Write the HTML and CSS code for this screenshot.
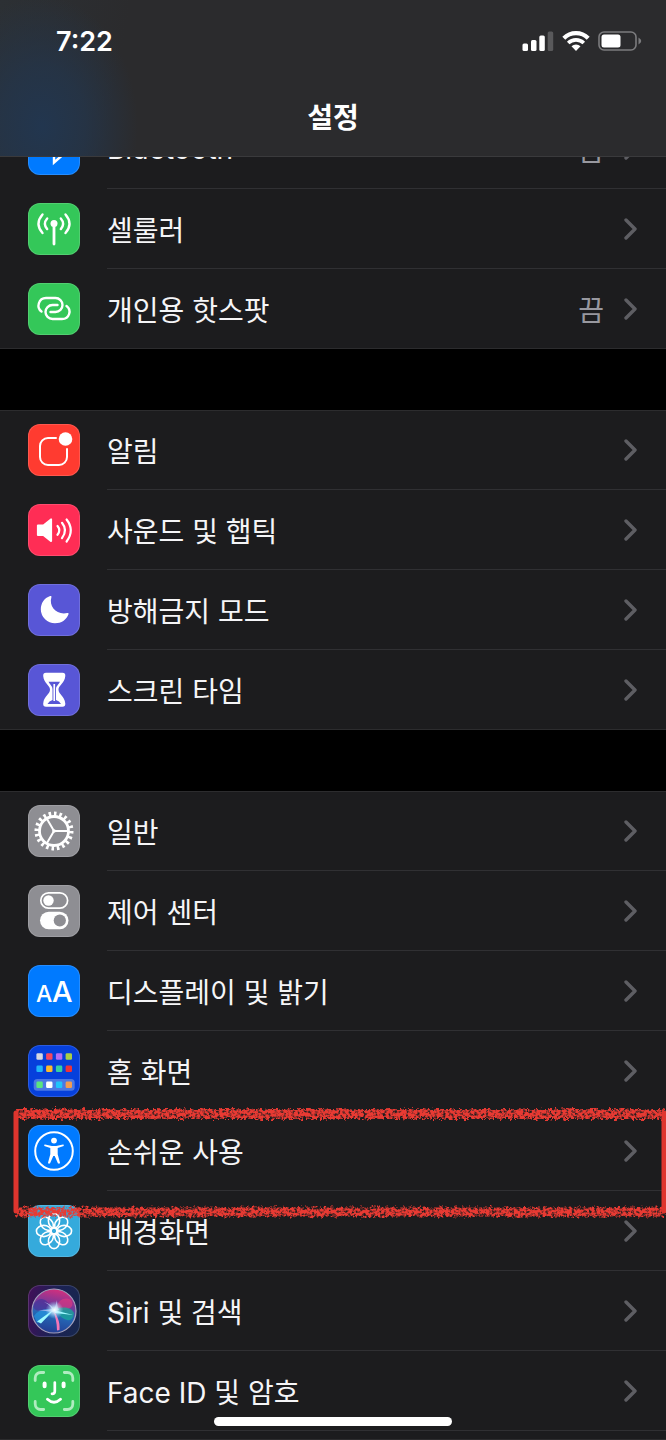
FILE: index.html
```html
<!DOCTYPE html>
<html lang="ko">

<head>
    <meta charset="UTF-8">
    <meta name="viewport" content="width=device-width, initial-scale=1.0">
    <title>설정</title>
    <link rel="stylesheet" href="styles.css">
</head>

<body>
    <svg class="defs" aria-hidden="true">
        <symbol id="chevron" viewBox="0 0 13 22">
            <path d="M2 2l9 9-9 9" fill="none" stroke="#5e5e63" stroke-width="3.400" stroke-linecap="round" stroke-linejoin="round" />
        </symbol>
    </svg>

    <header class="header">
        <div class="status-bar">
            <span class="time">7:22</span>
            <div class="status-icons">
                <svg width="32" height="20" viewBox="0 0 32 20" fill="#fff">
                    <rect x="0.5" y="12.5" width="5.5" height="7.5" rx="1.5" />
                    <rect x="9" y="9" width="5.5" height="11" rx="1.5" />
                    <rect x="17.300" y="4.5" width="5.5" height="15.5" rx="1.5" />
                    <rect x="25.700" y="0.5" width="5.5" height="19.5" rx="1.5" fill="#59595b" />
                </svg>
                <svg width="28" height="20" viewBox="0 0 28 20" fill="none" stroke="#fff">
                    <path d="M1.8 7.2a17.4 17.4 0 0 1 24.4 0" stroke-width="4.2" />
                    <path d="M6.2 12a11.2 11.2 0 0 1 15.6 0" stroke-width="3.6" />
                    <path d="M9.5 15.3a6.4 6.4 0 0 1 9 0L14 20z" fill="#fff" stroke="none" />
                </svg>
                <svg width="44" height="20" viewBox="0 0 44 20">
                    <rect x="1" y="1" width="37" height="18" rx="5" fill="none" stroke="#7c7c7e" stroke-width="1.6" />
                    <rect x="3.5" y="3.5" width="19" height="13" rx="2.5" fill="#fff" />
                    <path d="M40.5 6.5q5.500 3.500 0 7z" fill="#7c7c7e" />
                </svg>
            </div>
        </div>
        <h1 class="title">설정</h1>
    </header>

    <main class="settings">
        <nav class="group">
            <a class="row" href="#bluetooth">
                <svg class="icon blue" viewBox="0 0 52 52" fill="none" stroke="#fff" stroke-width="2.4">
                    <path d="M17.500 18.500l16 14.500-7.500 6.500v-28l7.500 7-16 14.500" />
                </svg>
                <span class="cell"><span class="label">Bluetooth</span><span class="value">끔</span><svg class="chevron"><use href="#chevron" /></svg></span>
            </a>
            <a class="row" href="#cellular">
                <svg class="icon green" viewBox="0 0 52 52" fill="none" stroke="#fff" stroke-width="2.4" stroke-linecap="round">
                    <circle cx="26" cy="20.500" r="3.500" fill="#fff" stroke="none" />
                    <path d="M26 22v19" stroke-width="2.800" />
                    <path d="M19.200 15.500q-4.600 5.300 0 10.600M14.500 11.500q-8 9.300 0 18.500M32.800 15.500q4.600 5.300 0 10.600M37.500 11.500q8 9.300 0 18.500" />
                </svg>
                <span class="cell"><span class="label">셀룰러</span><svg class="chevron"><use href="#chevron" /></svg></span>
            </a>
            <a class="row" href="#hotspot">
                <svg class="icon green" viewBox="0 0 52 52" fill="none" stroke="#fff" stroke-width="2.400" stroke-linecap="round">
                    <path d="M13.500 28.500C8 24.500 10.500 15 18 15h9.500a7 7 0 0 1 0 14h-5" />
                    <path d="M38.500 23C44 27 41.500 36 34 36h-9.500a7 7 0 0 1 0-14h5" />
                </svg>
                <span class="cell"><span class="label">개인용 핫스팟</span><span class="value">끔</span><svg class="chevron"><use href="#chevron" /></svg></span>
            </a>
        </nav>

        <nav class="group">
            <a class="row" href="#notifications">
                <svg class="icon red" viewBox="0 0 52 52" fill="none" stroke="#fff" stroke-width="2" stroke-linecap="round">
                    <path d="M28 14h-8a8 8 0 0 0-8 8v11a8 8 0 0 0 8 8h11a8 8 0 0 0 8-8v-8" />
                    <circle cx="37.500" cy="15" r="6.800" fill="#fff" stroke="none" />
                </svg>
                <span class="cell"><span class="label">알림</span><svg class="chevron"><use href="#chevron" /></svg></span>
            </a>
            <a class="row" href="#sounds">
                <svg class="icon pink" viewBox="0 0 52 52" fill="none" stroke="#fff" stroke-width="2.200" stroke-linecap="round">
                    <path d="M10 21.500h5.500l7.500-6v21.500l-7.500-6H10z" fill="#fff" stroke-linejoin="round" />
                    <path d="M29.500 22q3.600 4.200 0 8.800M34 18.800q6 7.400 0 15.400M38.600 15.500q8.400 10.700 0 22" />
                </svg>
                <span class="cell"><span class="label">사운드 및 햅틱</span><svg class="chevron"><use href="#chevron" /></svg></span>
            </a>
            <a class="row" href="#dnd">
                <svg class="icon purple" viewBox="0 0 52 52" fill="#fff">
                    <path d="M22.200 12c.8-.3 1.500.3 1.200 1.200C20.500 22.500 29 31.500 39.300 29c1-.2 1.600.4 1.200 1.300C38.300 36 33.500 39.300 27 39.300A14.200 14.200 0 0 1 12.800 25.500C12.800 19.500 16 14 22.200 12z" />
                </svg>
                <span class="cell"><span class="label">방해금지 모드</span><svg class="chevron"><use href="#chevron" /></svg></span>
            </a>
            <a class="row" href="#screen-time">
                <svg class="icon purple" viewBox="0 0 52 52">
                    <path d="M18 8.700h16.500q3 0 2.800 3.300C36.500 20 30.500 21 30.500 25.700S36.500 31.500 37.300 39.500q.2 3.300-2.800 3.300H18q-3 0-2.800-3.300C16 31.500 22 30.400 22 25.700S16 20 15.200 12q-.2-3.300 2.800-3.300z" fill="#fff" />
                    <path d="M20.500 17.800H32c-1.500 3.200-4 4-4 7.500V36q3.500.8 5 4H19.500q1.500-3.200 5-4V25.300c0-3.500-2.500-4.300-4-7.500z" fill="#5856d6" />
                    <path d="M26.250 20v17" stroke="#fff" stroke-width="1.700" />
                </svg>
                <span class="cell"><span class="label">스크린 타임</span><svg class="chevron"><use href="#chevron" /></svg></span>
            </a>
        </nav>

        <nav class="group last">
            <a class="row" href="#general">
                <svg class="icon gray" viewBox="0 0 52 52" fill="none" stroke="#fff">
                    <circle cx="26" cy="26" r="14.500" stroke-width="2.800" />
                    <circle cx="26" cy="26" r="17.200" stroke-width="4.600" pathLength="60" stroke-dasharray="1.400 1.600" />
                    <path d="M26 26h14M26 26l-7-12.100M26 26l-7 12.100" stroke-width="2" />
                    <circle cx="26" cy="26" r="1.800" fill="#fff" stroke="none" />
                </svg>
                <span class="cell"><span class="label">일반</span><svg class="chevron"><use href="#chevron" /></svg></span>
            </a>
            <a class="row" href="#control-center">
                <svg class="icon gray" viewBox="0 0 52 52">
                    <rect x="12.800" y="7.800" width="26.800" height="15.400" rx="7.700" fill="none" stroke="#fff" stroke-width="1.700" />
                    <circle cx="20.500" cy="15.500" r="5.200" fill="#fff" />
                    <rect x="12" y="26.800" width="28.500" height="17.400" rx="8.700" fill="#fff" />
                    <circle cx="31.800" cy="35.500" r="6.100" fill="#8e8e93" />
                </svg>
                <span class="cell"><span class="label">제어 센터</span><svg class="chevron"><use href="#chevron" /></svg></span>
            </a>
            <a class="row" href="#display">
                <svg class="icon blue" viewBox="0 0 52 52" fill="#fff">
                    <text class="icon-letter" x="8" y="37" font-size="23">A</text>
                    <text class="icon-letter" x="24" y="37" font-size="29">A</text>
                </svg>
                <span class="cell"><span class="label">디스플레이 및 밝기</span><svg class="chevron"><use href="#chevron" /></svg></span>
            </a>
            <a class="row" href="#home-screen">
                <svg class="icon navy" viewBox="0 0 52 52">
                    <rect x="5.700" y="34" width="41" height="11.800" rx="3.500" fill="#4b78e4" />
                    <rect x="8.400" y="8.300" width="6.400" height="6.400" rx="1.300" fill="#d5d9e2" />
                    <rect x="18.100" y="8.300" width="6.400" height="6.400" rx="1.300" fill="#f7475f" />
                    <rect x="27.900" y="8.300" width="6.400" height="6.400" rx="1.300" fill="#b36cf3" />
                    <rect x="37.600" y="8.300" width="6.400" height="6.400" rx="1.300" fill="#a9cf45" />
                    <rect x="8.400" y="20.600" width="6.400" height="6.400" rx="1.300" fill="#1fb5fa" />
                    <rect x="18.100" y="20.600" width="6.400" height="6.400" rx="1.300" fill="#fdb92c" />
                    <rect x="27.900" y="20.600" width="6.400" height="6.400" rx="1.300" fill="#34cfa2" />
                    <rect x="37.600" y="20.600" width="6.400" height="6.400" rx="1.300" fill="#ee3338" />
                    <rect x="8.400" y="36.600" width="6.400" height="6.400" rx="1.300" fill="#5be57d" />
                    <rect x="18.100" y="36.600" width="6.400" height="6.400" rx="1.300" fill="#fff" />
                    <rect x="27.900" y="36.600" width="6.400" height="6.400" rx="1.300" fill="#20c3fb" />
                    <rect x="37.600" y="36.600" width="6.400" height="6.400" rx="1.300" fill="#f39c50" />
                </svg>
                <span class="cell"><span class="label">홈 화면</span><svg class="chevron"><use href="#chevron" /></svg></span>
            </a>
            <a class="row marked" href="#accessibility">
                <svg class="icon blue" viewBox="0 0 52 52" fill="none" stroke="#fff" stroke-width="2">
                    <circle cx="26" cy="26" r="18.800" />
                    <circle cx="26" cy="15.600" r="2.900" fill="#fff" stroke="none" />
                    <path d="M17 19.600l6.800 1.500h4.400l6.800-1.500q1.200 0 .7 1.400l-6 1.900v6.300l2.300 8.600q-.6 1.500-2.100.4L26.700 31h-1.400l-3.200 7.200q-1.500 1.100-2.100-.4l2.300-8.600v-6.300l-6-1.900q-.5-1.400.7-1.400z" fill="#fff" stroke="none" />
                </svg>
                <span class="cell"><span class="label">손쉬운 사용</span><svg class="chevron"><use href="#chevron" /></svg></span>
                <svg class="crayon-box" aria-hidden="true">
                    <filter id="crayon" filterUnits="userSpaceOnUse" x="-20" y="-20" width="2000" height="160" color-interpolation-filters="sRGB">
                        <feTurbulence type="fractalNoise" baseFrequency="0.35" numOctaves="3" seed="4" result="noise" />
                        <feDisplacementMap in="SourceGraphic" in2="noise" scale="8" xChannelSelector="R" yChannelSelector="G" result="rough" />
                        <feColorMatrix in="noise" type="matrix" values="0 0 0 0 0  0 0 0 0 0  0 0 0 0 0  0 0 3 0 -0.600" result="grain" />
                        <feComposite in="rough" in2="grain" operator="in" />
                    </filter>
                    <g filter="url(#crayon)" stroke="#e83a33">
                        <line x1="4" y1="9" x2="100%" y2="9" stroke-width="10" />
                        <line x1="4" y1="107" x2="100%" y2="107" stroke-width="9" />
                    </g>
                    <g stroke="#df352e" stroke-width="5" stroke-linecap="round">
                        <line x1="4" y1="8" x2="4" y2="106" />
                        <line x1="100%" y1="8" x2="100%" y2="106" />
                    </g>
                </svg>
            </a>
            <a class="row" href="#wallpaper">
                <svg class="icon sky" viewBox="0 0 52 52" fill="none" stroke="#fff" stroke-width="1.600">
                    <g id="petals">
                        <ellipse cx="26" cy="15.800" rx="5.600" ry="7.400" />
                        <ellipse cx="26" cy="36.200" rx="5.600" ry="7.400" />
                        <ellipse cx="15.800" cy="26" rx="7.400" ry="5.600" />
                        <ellipse cx="36.200" cy="26" rx="7.400" ry="5.600" />
                    </g>
                    <use href="#petals" transform="rotate(45 26 26)" />
                    <circle cx="26" cy="26" r="3.200" />
                </svg>
                <span class="cell"><span class="label">배경화면</span><svg class="chevron"><use href="#chevron" /></svg></span>
            </a>
            <a class="row" href="#siri">
                <svg class="icon siri" viewBox="0 0 52 52">
                    <defs>
                        <linearGradient id="orb" x1="0.600" y1="0" x2="0.400" y2="1">
                            <stop offset="0" stop-color="#d62f7c" />
                            <stop offset="0.350" stop-color="#78389a" />
                            <stop offset="0.600" stop-color="#2468b6" />
                            <stop offset="1" stop-color="#243c93" />
                        </linearGradient>
                        <radialGradient id="glow">
                            <stop offset="0" stop-color="#fff" />
                            <stop offset="0.300" stop-color="#d8f4ff" stop-opacity="0.850" />
                            <stop offset="1" stop-color="#8fd4ff" stop-opacity="0" />
                        </radialGradient>
                    </defs>
                    <circle cx="26" cy="26" r="22" fill="url(#orb)" stroke="#a3a0bd" stroke-width="1.200" />
                    <path d="M26 26C18 12 12 11 6 19c-2 8 5 7 20 7z" fill="#46339a" opacity="0.700" />
                    <path d="M27 25c2-9 9-14 16-10 5 8-4 11-16 10z" fill="#e5397f" opacity="0.600" />
                    <path d="M26 25c8-4 17-3 20 3-1 9-8 11-20-3z" fill="#16aa98" opacity="0.750" />
                    <path d="M26 25C17 22 9 26 6 31l3 7c7-2 13-7 17-13z" fill="#2397df" opacity="0.700" />
                    <path d="M9 36.500l18-13-14 15zM26 25l19 5-18-2z" fill="#9dfaff" />
                    <path d="M25.500 26c3 3 7 11 6 19l-2.500.5c0-8-2-14-3.500-19.500z" fill="#f576b7" />
                    <path d="M16 17q8 2 10 8 2-6 3-10 0 7 2 10l-6 2q-7-1-15-2 9 0 14-1-3-5-8-7z" fill="#cfcdf7" opacity="0.700" />
                    <circle cx="26.500" cy="25" r="9" fill="url(#glow)" />
                </svg>
                <span class="cell"><span class="label">Siri 및 검색</span><svg class="chevron"><use href="#chevron" /></svg></span>
            </a>
            <a class="row" href="#face-id">
                <svg class="icon green" viewBox="0 0 52 52" fill="none" stroke="#fff" stroke-linecap="round">
                    <path d="M7.200 15.500V13a5.500 5.500 0 0 1 5.500-5.500h3M36.300 7.500h3a5.500 5.500 0 0 1 5.500 5.500v2.500M44.800 36.500V39a5.500 5.500 0 0 1-5.500 5.500h-3M15.700 44.500h-3A5.500 5.500 0 0 1 7.200 39v-2.500" stroke="#b0ecc0" stroke-width="2.800" />
                    <path d="M16.600 18.500v2.700M35.600 18.500v2.700" stroke-width="4" />
                    <path d="M26.800 17.500v8.700q0 2.600-2.800 2.600" stroke-width="2.700" />
                    <path d="M19.500 34.300q6.500 6 13 0" stroke-width="2.900" />
                </svg>
                <span class="cell"><span class="label">Face ID 및 암호</span><svg class="chevron"><use href="#chevron" /></svg></span>
            </a>
        </nav>
    </main>

    <div class="home-indicator"></div>
</body>

</html>
```
FILE: styles.css
```css
* {
    margin: 0;
    padding: 0;
    box-sizing: border-box;
}

body {
    font-family: Inter, "Noto Sans CJK KR", sans-serif;
    font-size: 28px;
    height: 100vh;
    overflow: hidden;
    background: #000;
    color: #f5f5f7;
}

svg {
    display: block;
    flex-shrink: 0;
}

.defs {
    position: absolute;
    width: 0;
    height: 0;
}

.header {
    position: fixed;
    top: 0;
    left: 0;
    right: 0;
    z-index: 10;
    height: 157px;
    border-bottom: 1px solid #3a3a3c;
    background:
        radial-gradient(ellipse 96px 130px at 42px 126px, #22364f 0%, #24354acc 45%, #2b2b2d00 100%),
        linear-gradient(100deg, #2c3034 0, #2b2b2d 130px);
}

.status-bar {
    display: flex;
    align-items: center;
    justify-content: space-between;
    height: 82px;
    padding: 0 24px 0 56px;
}

.time {
    font-size: 27px;
    font-weight: 600;
    color: #fff;
}

.status-icons {
    display: flex;
    gap: 8px;
}

.title {
    font-size: 28px;
    font-weight: 700;
    line-height: 72px;
    text-align: center;
    color: #fff;
}

.settings {
    display: flex;
    flex-direction: column;
    gap: 61px;
    min-height: 100vh;
    padding-top: 109px;
}

.group {
    background: #1c1c1e;
    box-shadow: inset 0 1px #2c2c2e, inset 0 -1px #2c2c2e;
}

.group.last {
    flex: 1;
}

.row {
    position: relative;
    display: flex;
    align-items: center;
    gap: 27px;
    height: 80px;
    padding-left: 28px;
    color: inherit;
    text-decoration: none;
}

.cell {
    display: flex;
    flex: 1;
    align-items: center;
    gap: 20px;
    height: 80px;
    padding-right: 29px;
    border-bottom: 1px solid #303033;
}

.group:not(.last) .row:last-child .cell {
    border-bottom-color: transparent;
}

.label {
    flex: 1;
}

.value {
    color: #98989f;
}

.chevron {
    width: 13px;
    height: 22px;
}

.icon {
    width: 52px;
    height: 52px;
    border-radius: 12px;
    box-shadow: inset 0 0 0 1px rgba(255, 255, 255, 0.15);
}

.icon-letter {
    font-family: Inter, sans-serif;
    font-weight: 500;
}

.blue { background: #007aff; }
.green { background: #34c759; }
.red { background: #ff3b30; }
.pink { background: #ff2d55; }
.purple { background: #5856d6; }
.gray { background: #8e8e93; }
.navy { background: #0640dc; }
.sky { background: #35aadc; }
.siri { background: linear-gradient(100deg, #430f59, #1c2154 50%, #17284e); }

/* hand drawn frame, runs over the row below */
.marked {
    z-index: 1;
}

.crayon-box {
    position: absolute;
    top: -6px;
    left: 12px;
    width: calc(100% - 14px);
    height: 116px;
    overflow: visible;
    pointer-events: none;
}

.home-indicator {
    position: fixed;
    bottom: 14px;
    left: 50%;
    z-index: 10;
    width: 238px;
    height: 9px;
    margin-left: -119px;
    border-radius: 5px;
    background: #fff;
}
```
